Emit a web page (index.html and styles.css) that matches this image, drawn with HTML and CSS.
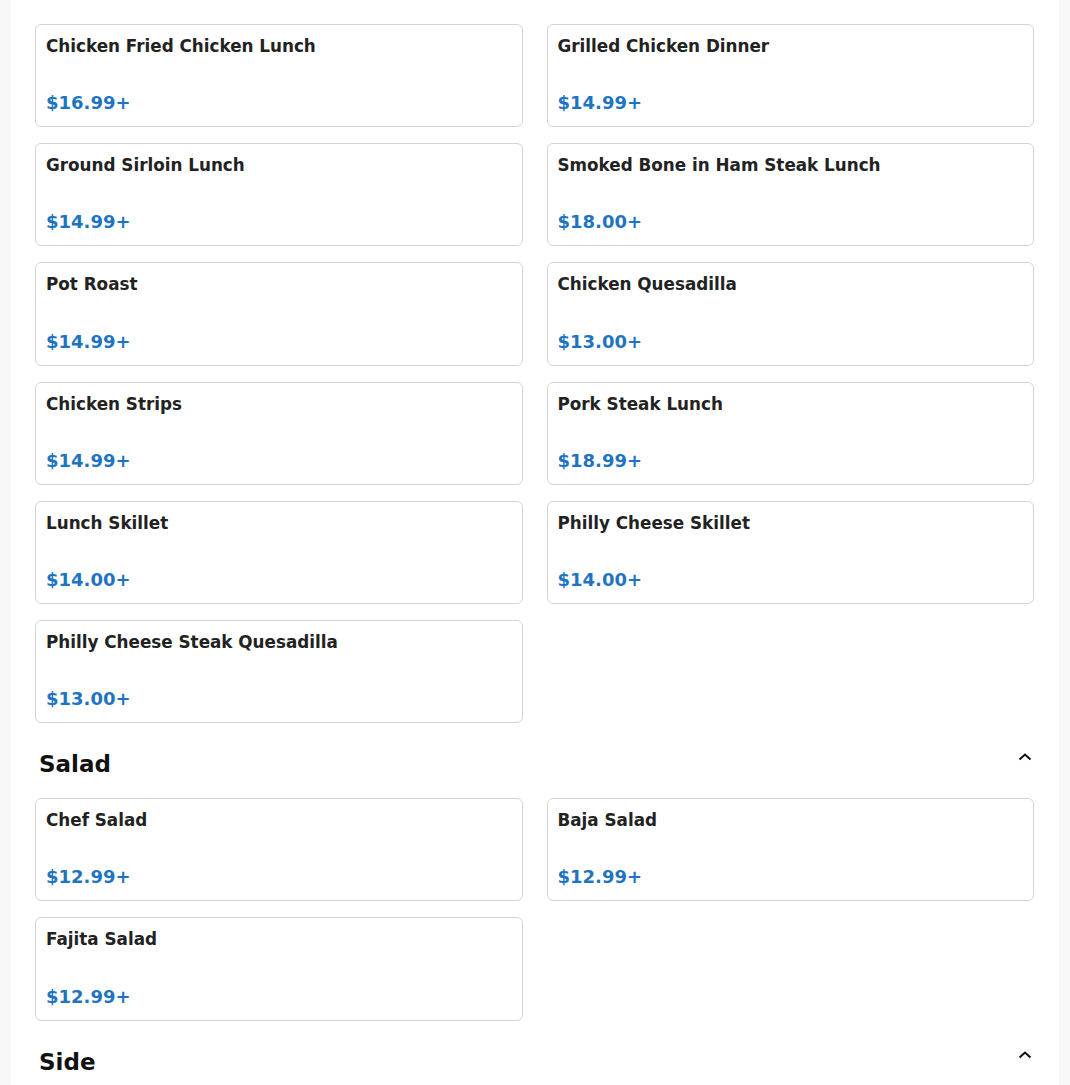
FILE: index.html
```html
<!DOCTYPE html>
<html>
<head>
<meta charset="utf-8">
<link rel="stylesheet" href="styles.css">
</head>
<body>
<div class="page">
  <div class="grid">
    <div class="card"><div class="name">Chicken Fried Chicken Lunch</div><div class="price">$16.99+</div></div>
    <div class="card"><div class="name">Grilled Chicken Dinner</div><div class="price">$14.99+</div></div>
    <div class="card"><div class="name">Ground Sirloin Lunch</div><div class="price">$14.99+</div></div>
    <div class="card"><div class="name">Smoked Bone in Ham Steak Lunch</div><div class="price">$18.00+</div></div>
    <div class="card"><div class="name">Pot Roast</div><div class="price">$14.99+</div></div>
    <div class="card"><div class="name">Chicken Quesadilla</div><div class="price">$13.00+</div></div>
    <div class="card"><div class="name">Chicken Strips</div><div class="price">$14.99+</div></div>
    <div class="card"><div class="name">Pork Steak Lunch</div><div class="price">$18.99+</div></div>
    <div class="card"><div class="name">Lunch Skillet</div><div class="price">$14.00+</div></div>
    <div class="card"><div class="name">Philly Cheese Skillet</div><div class="price">$14.00+</div></div>
    <div class="card"><div class="name">Philly Cheese Steak Quesadilla</div><div class="price">$13.00+</div></div>
  </div>

  <div class="section-head">
    <h2>Salad</h2>
    <svg class="chev" width="14" height="10" viewBox="0 0 14 10"><path d="M1.5 7.5 L7 2.5 L12.5 7.5" fill="none" stroke="#111" stroke-width="2"/></svg>
  </div>
  <div class="grid">
    <div class="card"><div class="name">Chef Salad</div><div class="price">$12.99+</div></div>
    <div class="card"><div class="name">Baja Salad</div><div class="price">$12.99+</div></div>
    <div class="card"><div class="name">Fajita Salad</div><div class="price">$12.99+</div></div>
  </div>

  <div class="section-head">
    <h2>Side</h2>
    <svg class="chev" width="14" height="10" viewBox="0 0 14 10"><path d="M1.5 7.5 L7 2.5 L12.5 7.5" fill="none" stroke="#111" stroke-width="2"/></svg>
  </div>
</div>
</body>
</html>
```

FILE: styles.css
```css
html, body {
  margin: 0;
  padding: 0;
  background: #f8f8f8;
  font-family: "DejaVu Sans", Verdana, sans-serif;
}
.page {
  margin: 0 11px;
  background: #fff;
  padding: 24px 25px 0 24px;
  min-height: 1085px;
  box-sizing: border-box;
}
.grid {
  display: grid;
  grid-template-columns: 1fr 1fr;
  column-gap: 24px;
  row-gap: 16px;
}
.card {
  border: 1px solid #d4d4d4;
  border-radius: 6px;
  padding: 11px 10px 13px;
  height: 103.2px;
  box-sizing: border-box;
  display: flex;
  flex-direction: column;
  justify-content: space-between;
}
.name {
  font-size: 16.8px;
  font-weight: bold;
  color: #222;
  line-height: 21px;
}
.price {
  font-size: 18px;
  font-weight: bold;
  color: #1f74c2;
  line-height: 21px;
}
.section-head {
  display: flex;
  justify-content: space-between;
  align-items: flex-start;
  padding: 27px 3px 0 4px;
  margin-bottom: 20px;
}
.section-head h2 {
  margin: 0;
  font-size: 23px;
  font-weight: bold;
  color: #111;
  line-height: 28px;
}
.chev {
  margin-top: 2px;
  margin-right: -1px;
}
```
